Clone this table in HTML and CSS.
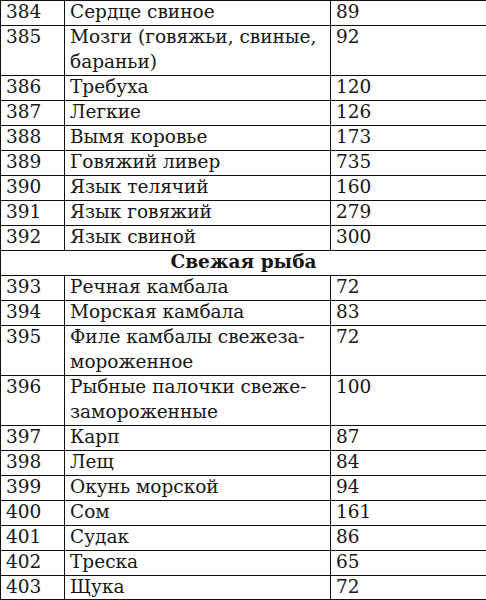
FILE: index.html
```html
<!DOCTYPE html>
<html lang="ru">
<head>
<meta charset="utf-8">
<link rel="stylesheet" href="styles.css">
</head>
<body>
<table class="tbl">
<colgroup><col class="c1"><col class="c2"><col class="c3"></colgroup>
<tbody>
<tr><td><div class="t">384</div></td><td><div class="t">Сердце свиное</div></td><td><div class="t">89</div></td></tr>
<tr><td><div class="t">385</div></td><td><div class="t">Мозги (говяжьи, свиные,<br>бараньи)</div></td><td><div class="t">92</div></td></tr>
<tr><td><div class="t">386</div></td><td><div class="t">Требуха</div></td><td><div class="t">120</div></td></tr>
<tr><td><div class="t">387</div></td><td><div class="t">Легкие</div></td><td><div class="t">126</div></td></tr>
<tr><td><div class="t">388</div></td><td><div class="t">Вымя коровье</div></td><td><div class="t">173</div></td></tr>
<tr><td><div class="t">389</div></td><td><div class="t">Говяжий ливер</div></td><td><div class="t">735</div></td></tr>
<tr><td><div class="t">390</div></td><td><div class="t">Язык телячий</div></td><td><div class="t">160</div></td></tr>
<tr><td><div class="t">391</div></td><td><div class="t">Язык говяжий</div></td><td><div class="t">279</div></td></tr>
<tr><td><div class="t">392</div></td><td><div class="t">Язык свиной</div></td><td><div class="t">300</div></td></tr>
<tr><td colspan="3" class="head"><div class="t">Свежая рыба</div></td></tr>
<tr><td><div class="t">393</div></td><td><div class="t">Речная камбала</div></td><td><div class="t">72</div></td></tr>
<tr><td><div class="t">394</div></td><td><div class="t">Морская камбала</div></td><td><div class="t">83</div></td></tr>
<tr><td><div class="t">395</div></td><td><div class="t">Филе камбалы свежеза-<br>мороженное</div></td><td><div class="t">72</div></td></tr>
<tr><td><div class="t">396</div></td><td><div class="t">Рыбные палочки свеже-<br>замороженные</div></td><td><div class="t">100</div></td></tr>
<tr><td><div class="t">397</div></td><td><div class="t">Карп</div></td><td><div class="t">87</div></td></tr>
<tr><td><div class="t">398</div></td><td><div class="t">Лещ</div></td><td><div class="t">84</div></td></tr>
<tr><td><div class="t">399</div></td><td><div class="t">Окунь морской</div></td><td><div class="t">94</div></td></tr>
<tr><td><div class="t">400</div></td><td><div class="t">Сом</div></td><td><div class="t">161</div></td></tr>
<tr><td><div class="t">401</div></td><td><div class="t">Судак</div></td><td><div class="t">86</div></td></tr>
<tr><td><div class="t">402</div></td><td><div class="t">Треска</div></td><td><div class="t">65</div></td></tr>
<tr class="last"><td><div class="t">403</div></td><td><div class="t">Щука</div></td><td><div class="t">72</div></td></tr>
</tbody>
</table>
</body>
</html>
```
FILE: styles.css
```css
html, body {
  margin: 0;
  padding: 0;
  background: #fff;
}
body {
  font-family: "DejaVu Serif", "Liberation Serif", serif;
  font-size: 18.5px;
  color: #161616;
}
.tbl {
  width: 486px;
  table-layout: fixed;
  border-collapse: separate;
  border-spacing: 0;
  border-top: 1px solid #111;
  border-left: 1px solid #111;
}
.c1 { width: 64px; }
.c2 { width: 266px; }
.c3 { width: 156px; }
.tbl td {
  padding: 0 0 0 5px;
  border-right: 1px solid #111;
  border-bottom: 1px solid #111;
  vertical-align: top;
  white-space: nowrap;
  overflow: hidden;
}
.t {
  line-height: 25px;
  margin-top: -2px;
  margin-bottom: 1px;
}
.last .t {
  margin-bottom: 0;
}
.tbl td.head {
  text-align: center;
  font-weight: bold;
  padding: 0;
}
```
